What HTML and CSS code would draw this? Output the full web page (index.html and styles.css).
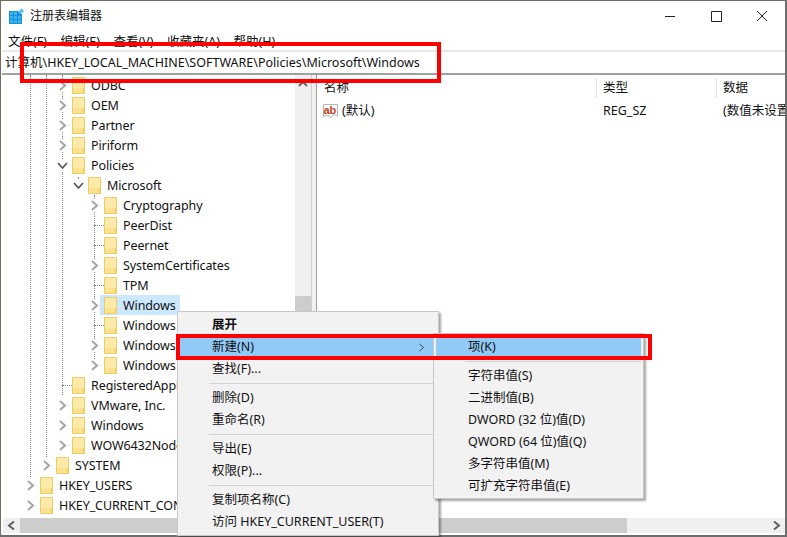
FILE: index.html
```html
<!DOCTYPE html>
<html lang="zh-CN">
<head>
<meta charset="utf-8">
<title>注册表编辑器</title>
<link rel="stylesheet" href="styles.css">
</head>
<body>
<svg class="defs" width="0" height="0" aria-hidden="true">
  <defs>
    <symbol id="folder" viewBox="0 0 13 17">
      <path d="M.5.5H12.5V16.5H.5Z" fill="#fde38f" stroke="#eccd6a"/>
      <path d="M1 1H12V11H1Z" fill="#fdeaa8"/>
      <path d="M10.5 11.5H12.5V16.5H10.5Z" fill="#f6cf5e"/>
    </symbol>
    <symbol id="cr" viewBox="0 0 9 11"><path d="M2 1L7 5.500L2 10" fill="none" stroke="#a6a6a6" stroke-width="2"/></symbol>
    <symbol id="cd" viewBox="0 0 11 9"><path d="M1 2L5.500 7L10 2" fill="none" stroke="#5a5a5a" stroke-width="1.800"/></symbol>
  </defs>
</svg>
<div class="window">
  <header class="title">
    <svg class="appicon" width="16" height="16" viewBox="0 0 16 16">
      <path d="M0 3H13V16H0Z" fill="#1b8fd6"/>
      <path d="M1 4H4V7H1ZM5 4H8V7H5ZM1 8H4V11H1ZM5 8H8V11H5ZM9 8H12V11H9ZM1 12H4V15H1ZM5 12H8V15H5ZM9 12H12V15H9Z" fill="#35b4f0"/>
      <path d="M12.500 0L15.500 3L12.500 6L9.500 3Z" fill="#5fc0ea" stroke="#fff" stroke-width=".6"/>
    </svg>
    <span class="title-text">注册表编辑器</span>
    <div class="winbtns">
      <svg width="46" height="30" viewBox="0 0 46 30"><path d="M18 15.500H28" stroke="#222"/></svg>
      <svg width="46" height="30" viewBox="0 0 46 30"><path d="M18.500 10.500H28.500V20.500H18.500Z" fill="none" stroke="#222"/></svg>
      <svg width="46" height="30" viewBox="0 0 46 30"><path d="M18 10L28 20M28 10L18 20" fill="none" stroke="#222"/></svg>
    </div>
  </header>
  <nav class="menubar">
    <span>文件(F)</span><span>编辑(E)</span><span>查看(V)</span><span>收藏夹(A)</span><span>帮助(H)</span>
  </nav>
  <div class="address">计算机\HKEY_LOCAL_MACHINE\SOFTWARE\Policies\Microsoft\Windows</div>
  <div class="panes">
    <section class="tree">
      <i class="vline v1"></i><i class="vline v2"></i><i class="vline v3"></i><i class="vline v4"></i><i class="vline v5"></i>
      <div class="row l3"><svg class="chev"><use href="#cr"/></svg><svg class="folder"><use href="#folder"/></svg><span>ODBC</span></div>
      <div class="row l3"><svg class="chev"><use href="#cr"/></svg><svg class="folder"><use href="#folder"/></svg><span>OEM</span></div>
      <div class="row l3"><svg class="chev"><use href="#cr"/></svg><svg class="folder"><use href="#folder"/></svg><span>Partner</span></div>
      <div class="row l3"><svg class="chev"><use href="#cr"/></svg><svg class="folder"><use href="#folder"/></svg><span>Piriform</span></div>
      <div class="row l3"><svg class="chev"><use href="#cd"/></svg><svg class="folder"><use href="#folder"/></svg><span>Policies</span></div>
      <div class="row l4"><svg class="chev"><use href="#cd"/></svg><svg class="folder"><use href="#folder"/></svg><span>Microsoft</span></div>
      <div class="row l5"><svg class="chev"><use href="#cr"/></svg><svg class="folder"><use href="#folder"/></svg><span>Cryptography</span></div>
      <div class="row l5"><i class="dots"></i><svg class="folder"><use href="#folder"/></svg><span>PeerDist</span></div>
      <div class="row l5"><i class="dots"></i><svg class="folder"><use href="#folder"/></svg><span>Peernet</span></div>
      <div class="row l5"><svg class="chev"><use href="#cr"/></svg><svg class="folder"><use href="#folder"/></svg><span>SystemCertificates</span></div>
      <div class="row l5"><i class="dots"></i><svg class="folder"><use href="#folder"/></svg><span>TPM</span></div>
      <div class="row l5 sel"><svg class="chev"><use href="#cr"/></svg><svg class="folder"><use href="#folder"/></svg><span>Windows</span></div>
      <div class="row l5"><i class="dots"></i><svg class="folder"><use href="#folder"/></svg><span>Windows</span></div>
      <div class="row l5"><svg class="chev"><use href="#cr"/></svg><svg class="folder"><use href="#folder"/></svg><span>Windows</span></div>
      <div class="row l5"><svg class="chev"><use href="#cr"/></svg><svg class="folder"><use href="#folder"/></svg><span>Windows</span></div>
      <div class="row l3"><i class="dots"></i><svg class="folder"><use href="#folder"/></svg><span>RegisteredApplications</span></div>
      <div class="row l3"><svg class="chev"><use href="#cr"/></svg><svg class="folder"><use href="#folder"/></svg><span>VMware, Inc.</span></div>
      <div class="row l3"><svg class="chev"><use href="#cr"/></svg><svg class="folder"><use href="#folder"/></svg><span>Windows</span></div>
      <div class="row l3"><svg class="chev"><use href="#cr"/></svg><svg class="folder"><use href="#folder"/></svg><span>WOW6432Node</span></div>
      <div class="row l2"><svg class="chev"><use href="#cr"/></svg><svg class="folder"><use href="#folder"/></svg><span>SYSTEM</span></div>
      <div class="row l1"><svg class="chev"><use href="#cr"/></svg><svg class="folder"><use href="#folder"/></svg><span>HKEY_USERS</span></div>
      <div class="row l1"><svg class="chev"><use href="#cr"/></svg><svg class="folder"><use href="#folder"/></svg><span>HKEY_CURRENT_CONFIG</span></div>
      <div class="vscroll">
        <svg width="16" height="18" viewBox="0 0 16 18"><path d="M4 11L8 7L12 11" fill="none" stroke="#606060" stroke-width="1.800"/></svg>
        <div class="vthumb"></div>
      </div>
    </section>
    <div class="splitter"></div>
    <section class="list">
      <div class="lhead"><span class="c1">名称</span><span class="c2">类型</span><span class="c3">数据</span></div>
      <div class="lrow">
        <span class="c1 name">
          <svg width="17" height="16" viewBox="0 0 17 16"><path d="M1.500 1.500H15.500V13L12 11.500L8.500 14.500L5.500 12L1.500 13.500Z" fill="#fff" stroke="#b5b5b5"/><text x="1.500" y="10.500" class="ab">ab</text></svg>
          (默认)
        </span>
        <span class="c2">REG_SZ</span>
        <span class="c3">(数值未设置)</span>
      </div>
    </section>
  </div>
  <div class="hscroll">
    <svg width="17" height="15" viewBox="0 0 17 15"><path d="M11 3.500L6 7.500L11 11.500" fill="none" stroke="#606060" stroke-width="2"/></svg>
    <div class="hthumb"></div>
    <div class="htrack"></div>
    <svg width="17" height="15" viewBox="0 0 17 15"><path d="M6 3.500L11 7.500L6 11.500" fill="none" stroke="#606060" stroke-width="2"/></svg>
  </div>
</div>

<div class="menu ctx">
  <div class="mi strong">展开</div>
  <div class="mi hot">新建(N)<svg class="arrow" width="7" height="9" viewBox="0 0 7 9"><path d="M1.500 1L5.500 4.500L1.500 8" fill="none" stroke="#444"/></svg></div>
  <div class="mi">查找(F)...</div>
  <div class="sep"></div>
  <div class="mi">删除(D)</div>
  <div class="mi">重命名(R)</div>
  <div class="sep"></div>
  <div class="mi">导出(E)</div>
  <div class="mi">权限(P)...</div>
  <div class="sep"></div>
  <div class="mi">复制项名称(C)</div>
  <div class="mi">访问 HKEY_CURRENT_USER(T)</div>
</div>
<div class="menu sub">
  <div class="mi hot">项(K)</div>
  <div class="sep"></div>
  <div class="mi">字符串值(S)</div>
  <div class="mi">二进制值(B)</div>
  <div class="mi">DWORD (32 位)值(D)</div>
  <div class="mi">QWORD (64 位)值(Q)</div>
  <div class="mi">多字符串值(M)</div>
  <div class="mi">可扩充字符串值(E)</div>
</div>
<div class="mark mark-addr"></div>
<div class="mark mark-new"></div>
</body>
</html>
```

FILE: styles.css
```css
* { box-sizing: border-box; }
html, body { margin: 0; height: 100%; overflow: hidden; }
body {
  position: relative;
  width: 787px;
  height: 537px;
  background: #fff;
  color: #111;
  font: 12.5px/20px "Noto Sans", "Noto Sans CJK SC", sans-serif;
}
.defs { position: absolute; }
.window {
  width: 787px;
  height: 537px;
  border: 1px solid #6f6f60;
  border-right: 2px solid #6e6e6e;
  border-bottom: 2px solid #6e6e6e;
  display: flex;
  flex-direction: column;
  background: #fff;
  padding: 0 0 2px 1px;
}
.title { height: 29px; flex: none; display: flex; align-items: center; padding-left: 7px; }
.appicon { margin-right: 5px; flex: none; }
.title-text { font-size: 12px; }
.winbtns { margin-left: auto; display: flex; height: 30px; }
.menubar { height: 20px; flex: none; display: flex; gap: 13.500px; padding: 2px 0 0 6px; }
.address {
  height: 25px;
  flex: none;
  border-top: 2px solid #e8e8e8;
  border-bottom: 2px solid #a0a0a0;
  padding: 1px 0 0 3px;
  line-height: 20px;
  white-space: nowrap;
}
.panes { flex: 1; min-height: 0; display: flex; }
.tree { position: relative; width: 309px; flex: none; overflow: hidden; letter-spacing: -.1px; }
.row { height: 20px; display: flex; align-items: center; white-space: nowrap; width: max-content; position: relative; }
.row span { padding-top: 2px; }
.l1 { margin-left: 23px; }
.l2 { margin-left: 39px; }
.l3 { margin-left: 55px; }
.l4 { margin-left: 71px; }
.l5 { margin-left: 87px; }
.chev { width: 11px; height: 11px; flex: none; margin-right: 4px; background: #fff; }
.dots { width: 10px; height: 0; flex: none; margin: 0 0 0 5px; border-top: 1px dotted #888; }
.folder { width: 13px; height: 17px; flex: none; margin-right: 6px; }
.sel.row { background: #cce8ff; margin-left: 98px; width: 80px; }
.sel .chev { position: absolute; left: -11px; }
.sel .folder { margin-left: 4px; }
.vline { position: absolute; top: 0; width: 0; border-left: 1px dotted #888; }
.v1 { left: 28px; height: 402px; }
.v2 { left: 44px; height: 382px; }
.v3 { left: 60px; height: 320px; }
.v4 { left: 76px; height: 4px; top: 102px; }
.v5 { left: 92px; height: 172px; top: 120px; }
.vscroll { position: absolute; top: 0; left: 293px; width: 16px; height: 445px; background: #f0f0f0; }
.vthumb { position: absolute; top: 221px; left: 0; width: 16px; height: 60px; background: #cdcdcd; }
.splitter { width: 6px; flex: none; border-left: 1px solid #d0d0d0; border-right: 1px solid #a0a0a0; background: #f0f0f0; }
.list { flex: 1; min-width: 0; overflow: hidden; }
.lhead { height: 24px; display: flex; align-items: center; padding-top: 1px; }
.lrow { height: 22px; display: flex; align-items: center; white-space: nowrap; padding-top: 2px; }
.c1 { width: 279px; padding-left: 7px; flex: none; }
.c2 { width: 120px; padding-left: 6px; flex: none; border-left: 1px solid #e5e5e5; }
.c3 { padding-left: 6px; flex: none; border-left: 1px solid #e5e5e5; }
.lrow .c2, .lrow .c3 { border-left-color: transparent; }
.name { display: flex; align-items: center; gap: 3px; padding-left: 5px; }
.ab { font: bold 11px "Liberation Sans", sans-serif; fill: #c8401c; }
.hscroll { height: 15px; flex: none; display: flex; background: #f0f0f0; margin-left: 1px; align-items: center; }
.hthumb { width: 607px; height: 15px; background: #cdcdcd; }
.htrack { flex: 1; }
.menu {
  position: absolute;
  background: #f2f2f2;
  border: 1px solid #c8c8c8;
  box-shadow: 2px 2px 2px rgba(0,0,0,.35);
  padding: 2px 2px 0;
}
.ctx { left: 177px; top: 311px; width: 262px; height: 225px; }
.sub { left: 433px; top: 333px; width: 211px; height: 166px; }
.mi { height: 22px; line-height: 22px; padding-left: 32px; position: relative; white-space: nowrap; }
.strong { font-weight: 700; }
.hot { background: #91c9f7; }
.arrow { position: absolute; right: 11px; top: 7px; }
.sep { height: 7px; margin-left: 29px; padding-top: 3px; }
.sep::before { content: ""; display: block; height: 1px; background: #d4d4d4; }
.mark { position: absolute; border: 4px solid #f00; }
.mark-addr { left: 20px; top: 42px; width: 421px; height: 41px; }
.mark-new { left: 176px; top: 334px; width: 476px; height: 26px; }
```
